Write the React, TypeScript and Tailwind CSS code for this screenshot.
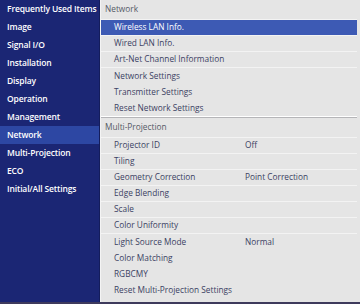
import React from "react";

type Row = { label: string; value?: string; selected?: boolean; line?: boolean };

const sideItems = [
    "Frequently Used Items",
    "Image",
    "Signal I/O",
    "Installation",
    "Display",
    "Operation",
    "Management",
    "Network",
    "Multi-Projection",
    "ECO",
    "Initial/All Settings",
];

const networkRows: Row[] = [
    { label: "Wireless LAN Info.", selected: true, line: true },
    { label: "Wired LAN Info.", line: true },
    { label: "Art-Net Channel Information", line: true },
    { label: "Network Settings" },
    { label: "Transmitter Settings" },
    { label: "Reset Network Settings" },
];

const multiRows: Row[] = [
    { label: "Projector ID", value: "Off", line: true },
    { label: "Tiling", line: true },
    { label: "Geometry Correction", value: "Point Correction", line: true },
    { label: "Edge Blending", line: true },
    { label: "Scale", line: true },
    { label: "Color Uniformity", line: true },
    { label: "Light Source Mode", value: "Normal" },
    { label: "Color Matching" },
    { label: "RGBCMY" },
    { label: "Reset Multi-Projection Settings" },
];

function MenuRow({ row }: { row: Row }) {
    return (
        <div
            className={`flex h-[16px] items-center pl-[13px] ${
                row.selected ? "bg-[#3d5ab4] text-white" : "text-[#3b3f63]"
            } ${row.line ? "border-b border-[#f3f3f3]" : ""}`}
        >
            <span className="w-[131px] shrink-0 whitespace-nowrap">{row.label}</span>
            {row.value && <span className="whitespace-nowrap">{row.value}</span>}
        </div>
    );
}

export default function App() {
    return (
        <div
            className="flex h-[304px] w-[360px] flex-col overflow-hidden bg-[#1b2674] text-[8.3px]"
            style={{ fontFamily: '"Open Sans", "Noto Sans", sans-serif' }}
        >
            <div className="flex min-h-0 flex-1">
                {/* left menu */}
                <div className="w-[100px] shrink-0 border-r border-[#141d5c] text-[8.5px] font-semibold tracking-[-0.15px] text-white">
                    {sideItems.map((item) => (
                        <div
                            key={item}
                            className={`flex h-[18px] items-center whitespace-nowrap pl-[7px] ${
                                item === "Network" ? "bg-[#2d47a3]" : ""
                            }`}
                        >
                            {item}
                        </div>
                    ))}
                </div>

                {/* right panel */}
                <div className="flex-1 border-l border-[#f4f4f4] bg-[#e5e5e5] pr-[2px]">
                    <div className="mr-[1px]">
                        <div className="flex h-[20px] items-center border-b border-[#f3f3f3] pl-[4px] text-[#555a66]">
                            Network
                        </div>
                        {networkRows.map((r) => (
                            <MenuRow key={r.label} row={r} />
                        ))}
                        <div className="h-[1px] bg-white" />
                        <div className="h-[1px] bg-[#b5b5b8]" />
                        <div className="flex h-[20px] items-center border-b border-[#f3f3f3] pl-[4px] text-[#555a66]">
                            Multi-Projection
                        </div>
                        {multiRows.map((r) => (
                            <MenuRow key={r.label} row={r} />
                        ))}
                    </div>
                </div>
            </div>
            <div className="h-[2px] bg-[#3e3a5c]" />
        </div>
    );
}
